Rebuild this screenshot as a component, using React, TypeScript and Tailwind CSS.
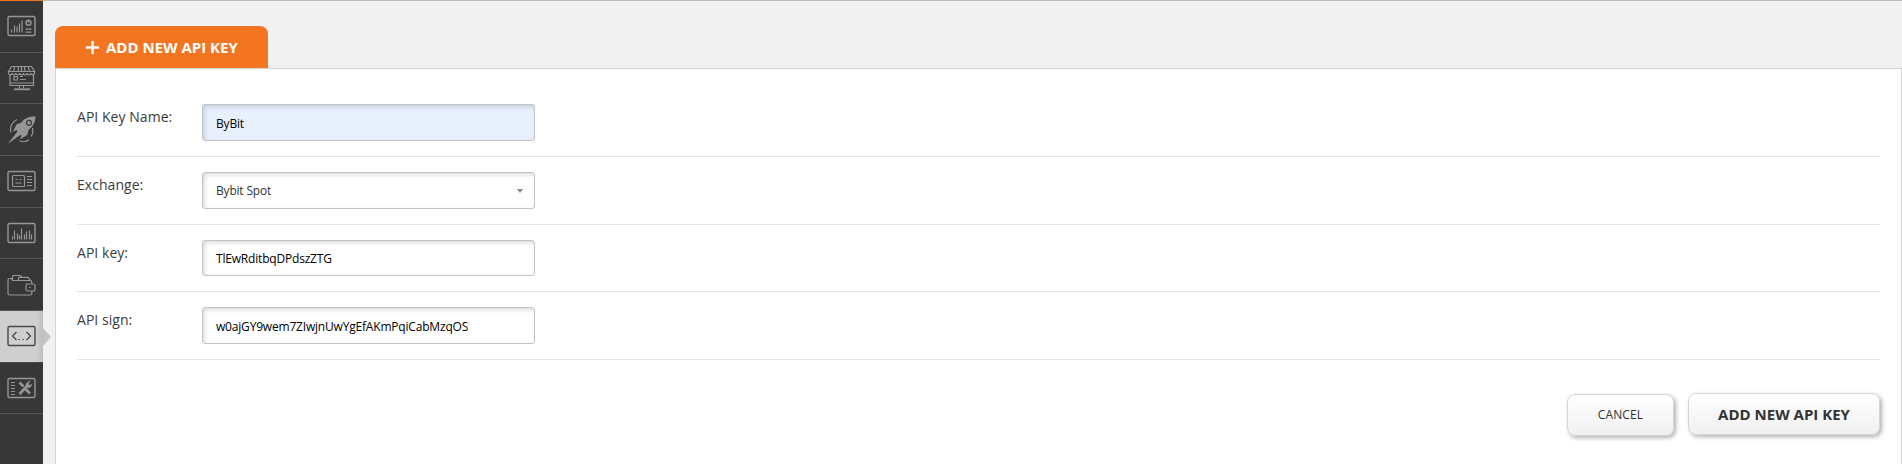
import type { ReactNode } from 'react';

interface NavItemProps {
  active?: boolean;
  children: ReactNode;
}

function NavItem({ active = false, children }: NavItemProps) {
  return (
    <li
      className={
        active
          ? 'relative flex h-[51.67px] items-center border-b border-[#4a4a4a] bg-linear-to-r from-[#cfcfcf] from-85% to-[#bebebe] pl-[7px] text-[#484848]'
          : 'flex h-[51.67px] items-center border-b border-[#555] pl-[7px] text-[#969696]'
      }
    >
      <svg
        width="29"
        height="28"
        viewBox="0 0 29 28"
        fill="none"
        stroke="currentColor"
        strokeWidth="1.2"
      >
        {children}
      </svg>
      {active && (
        <span className="absolute left-[43px] top-[17px] border-y-[9px] border-l-8 border-y-transparent border-l-[#c4c4c4]" />
      )}
    </li>
  );
}

function Frame() {
  return <rect x="1" y="4.5" width="27" height="19" rx="1.5" strokeWidth="1.4" />;
}

function Sidebar() {
  return (
    <ul className="w-[43px] shrink-0 border-t border-[#f47521] bg-[#373737]">
      {/* dashboard */}
      <NavItem>
        <Frame />
        <path d="M4.5 20.5v-3M7.5 20.5v-7M10 20.5v-6M12.500 20.5v-9M15 20.5v-12" />
        <circle cx="21.5" cy="10.8" r="2.5" strokeWidth="1.4" />
        <path d="M21.5 11V8.5M18.5 17.2h6M18.500 20.2h6" />
      </NavItem>
      {/* marketplace */}
      <NavItem>
        <path d="M4.5 2.5h20l3 5h-26zM7.5 3l-1 5M11.5 3l-.5 5M14.5 3v5M17.5 3l.5 5M21.5 3l1 5" />
        <path d="M1.5 7.5v1.5a1.8 1.8 0 0 0 3.6 0a1.8 1.8 0 0 0 3.7 0a1.8 1.8 0 0 0 3.8 0a1.8 1.8 0 0 0 3.8 0a1.8 1.8 0 0 0 3.8 0a1.8 1.8 0 0 0 3.7 0a1.8 1.8 0 0 0 3.6 0V7.5" />
        <path d="M3 10.5v11h23.500v-11M3 19h23.500M7 12.500h3.500v3.500h-3.500zM13 12.5h3M13 15.5h6M12.500 22v2.500M16.500 22v2.500" />
        <path d="M7 25.300h16" strokeWidth="1.800" />
      </NavItem>
      {/* launch */}
      <NavItem>
        <path
          d="M28.500 .3c-6.500.2-11 2-14.500 6.500l-4.500 1.700-3.500 7 4.500-1.500-.8 2.500L.7 28 12 19.800l2.500-1-1.300 4.400 7-4.200 1.300-5C26 10.500 28.300 6.500 28.500.3z"
          fill="currentColor"
          stroke="none"
        />
        <circle cx="22" cy="6.800" r="2.500" stroke="#3b3b3b" />
        <path d="M10 3.500C4.500 6 2.500 11.500 4 16.500M12.500 24.800c3.500 1.500 7 1 9.500-1M24 20.500c1.800-2.500 2.200-5.500 1.500-8.500" />
      </NavItem>
      {/* bots */}
      <NavItem>
        <Frame />
        <rect x="5.5" y="8.500" width="12" height="11" rx="1" />
        <path d="M8.500 12.500h2M12.500 12.500h2M8.500 16h6M20 9.500h5M20 12.500h5M20 15.500h5M20 18.500h5" />
      </NavItem>
      {/* statistics */}
      <NavItem>
        <Frame />
        <path d="M5.500 20.500v-3M7.500 20.500v-9M10.500 20.500v-6M12.500 20.500v-4M14.500 20.500v-11M17.500 20.500v-5M19.500 20.500v-8M22.500 20.500v-9M24.500 20.500v-5" />
      </NavItem>
      {/* wallet */}
      <NavItem>
        <path d="M24.800 12.500v-1.500a1.500 1.500 0 0 0-1.500-1.500H5.500L4.500 7.500H2.500a1.500 1.500 0 0 0-1.500 1.500v13.500a1.500 1.500 0 0 0 1.500 1.500h20.800a1.500 1.500 0 0 0 1.500-1.500V20" />
        <path d="M5.500 9.500V5.500a1 1 0 0 1 1-1h7l1.500 1.800M11.500 9.500V7.300a1 1 0 0 1 1-1h8.500l2.500 3.200" />
        <path d="M20.500 13h5.500a2 2 0 0 1 2 2v3a2 2 0 0 1-2 2h-5.500a1.500 1.500 0 0 1-1.500-1.500v-4a1.500 1.500 0 0 1 1.500-1.500z" />
        <path d="M22 16.500h1.500" />
      </NavItem>
      {/* api keys */}
      <NavItem active>
        <Frame />
        <path d="M9.500 10l-4 4 4 4M19.500 10l4 4-4 4" strokeWidth="1.300" />
        <path d="M11.500 17.500h1.500M15.500 17.500h1.500" />
      </NavItem>
      {/* settings */}
      <NavItem>
        <Frame />
        <path d="M4 8.500h4M4 11.500h4M4 14.500h4M4 17.500h4M4 20.500h4" />
        <path d="M12.500 8.500l4 4M18.500 15l4.500 4.500M12.500 20l7-7.500" strokeWidth="2.600" />
        <path d="M23 7.500l-2 2.500 2 1.500 1.500-1.500c.5 2.500-2 4.500-4.500 3.500-2-1-1.500-5.500 3-6z" fill="currentColor" strokeWidth="0.600" />
      </NavItem>
    </ul>
  );
}

interface FieldRowProps {
  label: string;
  value: string;
  filled?: boolean;
  select?: boolean;
}

function FieldRow({ label, value, filled = false, select = false }: FieldRowProps) {
  return (
    <div className="flex h-[67.67px] border-b border-[#e4e4e4] pt-[15px]">
      <label className="w-[125px] pt-[3px] text-[14px] leading-[20px] tracking-[0.04px] text-[#3c3c3c]">{label}</label>
      <div
        className={`flex h-[36.67px] w-[333px] items-center justify-between rounded-[3px] border border-[#c3c3c3] pl-[13px] pr-[11px] pt-[2px] text-[12px] tracking-[-0.19px] shadow-[inset_2px_2px_4px_rgba(0,0,0,0.14)] ${
          filled ? 'bg-[#e8f0fe]' : 'bg-white'
        } ${select ? 'text-[#333]' : 'text-black'}`}
      >
        {value}
        {select && <span className="border-x-[3.5px] border-t-4 border-x-transparent border-t-[#888]" />}
      </div>
    </div>
  );
}

export default function App() {
  return (
    <div className="flex h-[464px] overflow-hidden bg-[#f1f1f1] font-['Open_Sans',sans-serif]">
      <Sidebar />
      <main className="flex grow flex-col border-t border-[#bbb] pl-3 pt-[25px]">
        <div className="flex h-[42px] w-[213px] shrink-0 items-center rounded-t-[8px] bg-[#f47521] pl-[31px] text-[15px] font-bold text-white">
          <svg width="13" height="13" viewBox="0 0 13 13" stroke="currentColor" strokeWidth="2.4" className="mr-[7px]">
            <path d="M6.5 0v13M0 6.5h13" />
          </svg>
          ADD NEW API KEY
        </div>

        <section className="grow border-x border-t border-[#d5d5d5] bg-white pl-[21px] pr-[21px] pt-[20.33px]">
          <FieldRow label="API Key Name:" value="ByBit" filled />
          <FieldRow label="Exchange:" value="Bybit Spot" select />
          <FieldRow label="API key:" value="TlEwRditbqDPdszZTG" />
          <FieldRow label="API sign:" value="w0ajGY9wem7ZIwjnUwYgEfAKmPqiCabMzqOS" />

          <div className="mt-[33px] flex justify-end gap-[14px]">
            <button className="mt-px h-[42px] w-[107px] rounded-[8px] border border-[#d5d5d5] bg-linear-to-b from-white to-[#f0f0f0] pt-px text-[12px] tracking-[0.15px] text-[#333] shadow-[2px_2px_4px_rgba(0,0,0,0.3)]">
              CANCEL
            </button>
            <button className="h-[42px] w-[192px] rounded-[8px] border border-[#d5d5d5] bg-linear-to-b from-white to-[#f0f0f0] pt-px text-[15px] font-bold text-[#333] shadow-[2px_2px_4px_rgba(0,0,0,0.3)]">
              ADD NEW API KEY
            </button>
          </div>
        </section>
      </main>
    </div>
  );
}
